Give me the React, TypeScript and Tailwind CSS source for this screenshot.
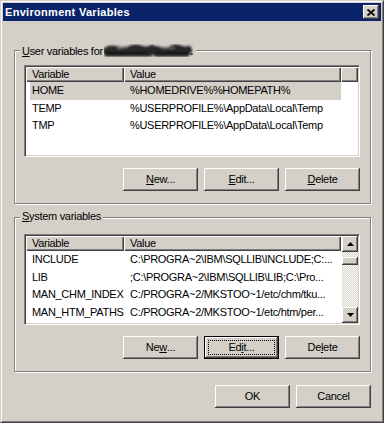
import React from "react";

const raised =
  "bg-[#d4d0c8] shadow-[inset_-1px_-1px_#404040,inset_1px_1px_#fff,inset_-2px_-2px_#808080,inset_2px_2px_#d4d0c8]";

function Btn({ children, def }: { children: React.ReactNode; def?: boolean }) {
  if (def) {
    return (
      <div className="w-[75px] h-[23px] border border-black box-border">
        <div className="w-full h-full bg-[#d4d0c8] shadow-[inset_-1px_-1px_#404040,inset_1px_1px_#fff,inset_-2px_-2px_#808080] p-[3px]">
          <div className="w-full h-full border border-dotted border-black flex items-center justify-center leading-none">
            {children}
          </div>
        </div>
      </div>
    );
  }
  return (
    <div className={`w-[75px] h-[23px] ${raised} flex items-center justify-center leading-none`}>
      {children}
    </div>
  );
}

function U({ children }: { children: React.ReactNode }) {
  return <span className="underline underline-offset-[1px] decoration-1">{children}</span>;
}

function GroupBox({
  label,
  children,
  className,
}: {
  label: React.ReactNode;
  children: React.ReactNode;
  className?: string;
}) {
  return (
    <div
      className={`relative border border-[#808080] shadow-[1px_1px_0_#fff,inset_1px_1px_0_#fff] ${className ?? ""}`}
    >
      <div className="absolute left-[5px] top-[-8px] px-[2px] bg-[#d4d0c8] leading-[13px] flex items-center whitespace-nowrap">
        {label}
      </div>
      {children}
    </div>
  );
}

const headerCell =
  "h-full shrink-0 bg-[#d4d0c8] shadow-[inset_1px_1px_#fff,inset_-1px_-1px_#404040,inset_-2px_-2px_#808080] flex items-center leading-none";

function Header() {
  return (
    <div className="h-[15px] flex shrink-0">
      <div className={`${headerCell} w-[98px] pl-[6px]`}>Variable</div>
      <div className={`${headerCell} w-[217px] pl-[6px]`}>Value</div>
      <div className={`${headerCell} flex-1`} />
    </div>
  );
}

function Row({ name, value, sel }: { name: string; value: string; sel?: boolean }) {
  return (
    <div className="h-[17.5px] flex shrink-0">
      <div className={`ml-[4px] w-[311px] h-full flex items-center ${sel ? "bg-[#d4d0c8]" : ""}`}>
        <div className="w-[94px] pl-[2px] shrink-0 whitespace-nowrap overflow-hidden leading-none">{name}</div>
        <div className="w-[211px] pl-[6px] shrink-0 whitespace-nowrap overflow-hidden leading-none">{value}</div>
      </div>
    </div>
  );
}

const sunken =
  "bg-white border border-t-[#808080] border-l-[#808080] border-r-white border-b-white p-px shadow-[inset_1px_1px_#404040,inset_-1px_-1px_#d4d0c8]";

function Arrow({ up }: { up?: boolean }) {
  return (
    <svg width="7" height="4" viewBox="0 0 7 4">
      {up ? <polygon points="3.5,0 7,4 0,4" fill="#000" /> : <polygon points="0,0 7,0 3.5,4" fill="#000" />}
    </svg>
  );
}

function Scribble() {
  return (
    <svg width="90" height="16" viewBox="0 0 90 16" className="ml-[1px]">
      <defs>
        <filter id="bl" x="-10%" y="-40%" width="120%" height="180%">
          <feGaussianBlur stdDeviation="0.8" />
        </filter>
      </defs>
      <g filter="url(#bl)" strokeLinecap="round" strokeLinejoin="round" fill="none">
        <path d="M3 8 C10 3 18 12 26 7 S40 11 48 6" strokeWidth="8" stroke="#2b2b2b" />
        <path d="M3 11 L46 11" strokeWidth="5" stroke="#1e1e1e" />
        <path d="M46 8 C53 4 60 12 67 7 S78 10 84 7" strokeWidth="8" stroke="#262626" />
        <path d="M52 11 L83 11" strokeWidth="5" stroke="#1a1a1a" />
        <path d="M14 5 L22 4" strokeWidth="2" stroke="#707070" />
        <path d="M58 5 L70 5" strokeWidth="2" stroke="#606060" />
      </g>
      <circle cx="87.5" cy="11" r="1.3" fill="#444" />
    </svg>
  );
}

export default function App() {
  return (
    <div className="w-[384px] h-[423px] box-border bg-[#d4d0c8] border border-t-[#d4d0c8] border-l-[#d4d0c8] border-r-[#404040] border-b-[#404040] font-['Liberation_Sans',Arial,sans-serif] text-[11px] tracking-[-0.3px] text-black">
      <div className="h-full box-border border border-t-white border-l-white border-r-[#808080] border-b-[#808080] p-px flex flex-col">
        {/* Title bar */}
        <div className="h-[18px] shrink-0 bg-[#0a246a] flex items-center justify-between">
          <div className="pl-[2px] text-white font-bold tracking-[0.3px] leading-none">Environment Variables</div>
          <div className={`w-[16px] h-[14px] mr-[2px] ${raised} flex items-center justify-center`}>
            <svg width="8" height="7" viewBox="0 0 8 7">
              <path d="M0.5 0.5 L7.5 6.5 M7.5 0.5 L0.5 6.5" stroke="#000" strokeWidth="1.8" />
            </svg>
          </div>
        </div>

        {/* Content */}
        <div className="flex flex-col flex-1">
          <GroupBox
            className="ml-[11px] mt-[29px] w-[357px] pl-[9px] pr-[10px] pt-[14px] pb-[12px]"
            label={
              <>
                <span>
                  <U>U</U>ser variables for{" "}
                </span>
                <Scribble />
              </>
            }
          >
            <div className={`${sunken} w-[336px] h-[92px] box-border flex flex-col overflow-hidden`}>
              <Header />
              <Row name="HOME" value="%HOMEDRIVE%%HOMEPATH%" sel />
              <Row name="TEMP" value="%USERPROFILE%\AppData\Local\Temp" />
              <Row name="TMP" value="%USERPROFILE%\AppData\Local\Temp" />
            </div>
            <div className="mt-[11px] flex justify-end gap-[6px]">
              <Btn>
                <U>N</U>ew...
              </Btn>
              <Btn>
                <U>E</U>dit...
              </Btn>
              <Btn>
                <U>D</U>elete
              </Btn>
            </div>
          </GroupBox>

          <GroupBox
            className="ml-[11px] mt-[13px] w-[357px] pl-[9px] pr-[10px] pt-[16px] pb-[12px]"
            label={
              <span>
                <U>S</U>ystem variables
              </span>
            }
          >
            <div className={`${sunken} w-[336px] h-[91px] box-border flex overflow-hidden`}>
              <div className="flex-1 flex flex-col overflow-hidden">
                <div className="h-[15px] flex shrink-0">
                  <div className={`${headerCell} w-[98px] pl-[6px]`}>Variable</div>
                  <div className={`${headerCell} w-[217px] pl-[6px]`}>Value</div>
                </div>
                <Row name="INCLUDE" value="C:\PROGRA~2\IBM\SQLLIB\INCLUDE;C:..." />
                <Row name="LIB" value=";C:\PROGRA~2\IBM\SQLLIB\LIB;C:\Pro..." />
                <Row name="MAN_CHM_INDEX" value="C:/PROGRA~2/MKSTOO~1/etc/chm/tku..." />
                <Row name="MAN_HTM_PATHS" value="C:/PROGRA~2/MKSTOO~1/etc/htm/per..." />
              </div>
              <div className="w-[16px] shrink-0 flex flex-col bg-[repeating-conic-gradient(#d4d0c8_0%_25%,#fff_0%_50%)] bg-[length:2px_2px]">
                <div className={`h-[16px] shrink-0 ${raised} flex items-center justify-center`}>
                  <Arrow up />
                </div>
                <div className="h-[5px] shrink-0" />
                <div className={`h-[8px] shrink-0 ${raised}`} />
                <div className="flex-1" />
                <div className={`h-[16px] shrink-0 ${raised} flex items-center justify-center`}>
                  <Arrow />
                </div>
              </div>
            </div>
            <div className="mt-[11px] flex justify-end gap-[6px]">
              <Btn>
                Ne<U>w</U>...
              </Btn>
              <Btn def>
                Ed<U>i</U>t...
              </Btn>
              <Btn>
                De<U>l</U>ete
              </Btn>
            </div>
          </GroupBox>

          <div className="mt-[13px] mr-[10px] flex justify-end gap-[6px]">
            <Btn>OK</Btn>
            <Btn>Cancel</Btn>
          </div>
        </div>
      </div>
    </div>
  );
}
